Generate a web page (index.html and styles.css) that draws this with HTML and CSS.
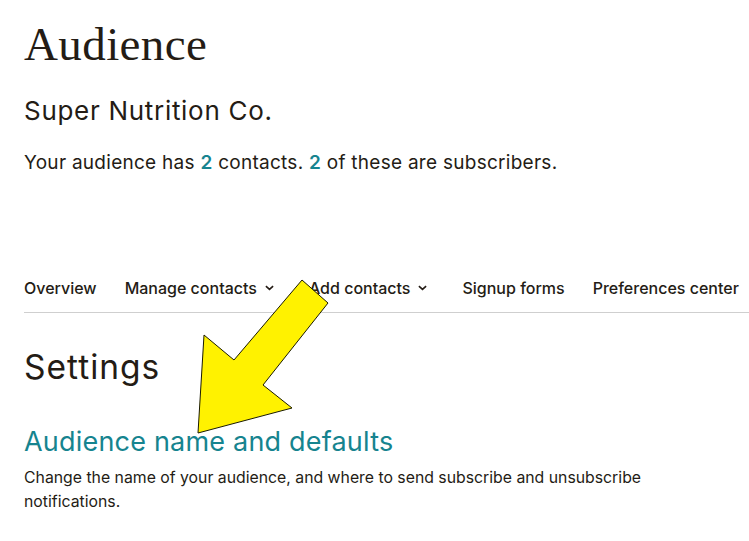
FILE: index.html
```html
<!DOCTYPE html>
<html>
<head>
<meta charset="utf-8">
<link rel="stylesheet" href="styles.css">
</head>
<body>
<div class="page">
  <header class="head">
    <h1 class="title">Audience</h1>
    <h2 class="org">Super Nutrition Co.</h2>
    <p class="summary">Your audience has <span class="num">2</span> contacts. <span class="num">2</span> of these are subscribers.</p>
  </header>
  <nav class="tabs">
    <span class="tab">Overview</span>
    <span class="tab">Manage contacts <svg class="chev" viewBox="0 0 10 6" width="9" height="6"><path d="M1 1l4 3.6L9 1" fill="none" stroke="#241c15" stroke-width="1.8"/></svg></span>
    <span class="tab">Add contacts <svg class="chev" viewBox="0 0 10 6" width="9" height="6"><path d="M1 1l4 3.6L9 1" fill="none" stroke="#241c15" stroke-width="1.8"/></svg></span>
    <span class="tab">Signup forms</span>
    <span class="tab">Preferences center</span>
  </nav>
  <section class="settings">
    <h2 class="settings-title">Settings</h2>
    <h3 class="sub">Audience name and defaults</h3>
    <p class="desc">Change the name of your audience, and where to send subscribe and unsubscribe notifications.</p>
  </section>
</div>
<svg class="arrow" width="749" height="541" viewBox="0 0 749 541">
  <polygon points="198,433 204,335 234,360 302,280 328,303 263,385 292,408" fill="#fff200" stroke="#1a1a00" stroke-width="1" stroke-linejoin="miter"/>
</svg>
</body>
</html>
```

FILE: styles.css
```css
html, body {
  margin: 0;
  padding: 0;
  background: #fff;
}
body {
  position: relative;
  overflow: hidden;
  width: 749px;
  height: 541px;
  font-family: "Inter", "Noto Sans", sans-serif;
  color: #241c15;
}
.page {
  padding-left: 24px;
}
.title {
  margin: 0;
  padding-top: 17px;
  font-family: "Liberation Serif", "DejaVu Serif", serif;
  font-weight: 400;
  font-size: 47px;
  line-height: 54px;
  letter-spacing: 0.4px;
}
.org {
  margin: 0;
  padding-top: 24px;
  font-size: 26px;
  font-weight: 400;
  line-height: 32px;
  letter-spacing: 0.7px;
}
.summary {
  margin: 0;
  padding-top: 22px;
  font-size: 19px;
  line-height: 28px;
  letter-spacing: 0.27px;
}
.num {
  color: #16848f;
  font-weight: 600;
}
.tabs {
  margin-top: 92px;
  display: flex;
  align-items: center;
  gap: 28px;
  height: 38px;
  border-bottom: 1px solid #cfcfcf;
  padding-bottom: 5px;
  width: 725px;
  white-space: nowrap;
}
.tab {
  font-size: 16px;
  font-weight: 500;
  display: flex;
  align-items: center;
  gap: 8px;
}
.chev {
  margin-right: 7px;
}
.settings-title {
  margin: 0;
  padding-top: 34px;
  font-size: 33.5px;
  font-weight: 400;
  line-height: 40px;
  letter-spacing: 1px;
}
.sub {
  margin: 0;
  padding-top: 38px;
  font-size: 27px;
  font-weight: 400;
  line-height: 34px;
  letter-spacing: 0.2px;
  color: #16848f;
}
.desc {
  margin: 0;
  padding-top: 7px;
  font-size: 15.8px;
  line-height: 24px;
  width: 640px;
}
.arrow {
  position: absolute;
  left: 0;
  top: 0;
  pointer-events: none;
}
```
